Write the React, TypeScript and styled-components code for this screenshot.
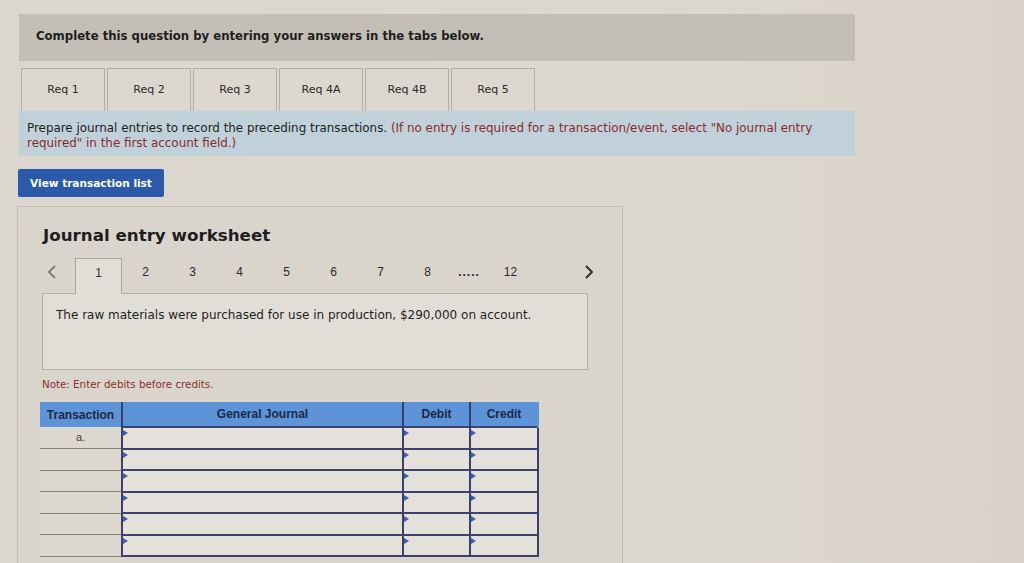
import React from 'react'
import styled, { createGlobalStyle } from 'styled-components'

const tabs = ['Req 1', 'Req 2', 'Req 3', 'Req 4A', 'Req 4B', 'Req 5']
const pages = ['2', '3', '4', '5', '6', '7', '8']
const rows = ['a.', '', '', '', '', '']

export default function App() {
	return (
		<Page>
			<GlobalStyle />
			<Header>Complete this question by entering your answers in the tabs below.</Header>
			<Tabs>
				{tabs.map((t) => (
					<Tab key={t}>{t}</Tab>
				))}
			</Tabs>
			<Instructions>
				Prepare journal entries to record the preceding transactions.{' '}
				<Red>
					(If no entry is required for a transaction/event, select "No journal entry
					required" in the first account field.)
				</Red>
			</Instructions>
			<Button>View transaction list</Button>
			<Worksheet>
				<Title>Journal entry worksheet</Title>
				<Nav>
					<Chevron>
						<svg width="10" height="14" viewBox="0 0 10 14">
							<path d="M8 1 L2 7 L8 13" fill="none" stroke="#6b6862" strokeWidth="1.6" />
						</svg>
					</Chevron>
					<ActivePage>1</ActivePage>
					{pages.map((p) => (
						<PageNum key={p}>{p}</PageNum>
					))}
					<Dots>.....</Dots>
					<PageNum>12</PageNum>
					<NavRight>
						<svg width="10" height="14" viewBox="0 0 10 14">
							<path d="M2 1 L8 7 L2 13" fill="none" stroke="#2a2a2a" strokeWidth="1.8" />
						</svg>
					</NavRight>
				</Nav>
				<Description>
					The raw materials were purchased for use in production, $290,000 on account.
				</Description>
				<Note>Note: Enter debits before credits.</Note>
				<Table>
					<colgroup>
						<col style={{ width: 82 }} />
						<col style={{ width: 281 }} />
						<col style={{ width: 67 }} />
						<col style={{ width: 68 }} />
					</colgroup>
					<thead>
						<tr>
							<Th>Transaction</Th>
							<Th>General Journal</Th>
							<Th>Debit</Th>
							<Th>Credit</Th>
						</tr>
					</thead>
					<tbody>
						{rows.map((r, i) => (
							<tr key={i}>
								<TxCell>{r}</TxCell>
								<InputCell />
								<InputCell />
								<InputCell />
							</tr>
						))}
					</tbody>
				</Table>
			</Worksheet>
		</Page>
	)
}

const GlobalStyle = createGlobalStyle`
	html, body {
		margin: 0;
		background: #dbd6cd;
		font-family: "DejaVu Sans", Verdana, sans-serif;
		overflow: hidden;
	}
`

const Page = styled.div`
	width: 1024px;
	height: 563px;
	overflow: hidden;
	padding: 14px 0 0 19px;
	box-sizing: border-box;
	background: linear-gradient(90deg, #dcd7ce 0%, #ddd8cf 70%, #d8d2c8 100%);
`

const Header = styled.div`
	width: 836px;
	height: 47px;
	box-sizing: border-box;
	padding: 0 17px 4px;
	display: flex;
	align-items: center;
	background: #c3beb6;
	font-size: 11.7px;
	font-weight: bold;
	color: #1e1e1e;
`

const Tabs = styled.div`
	display: flex;
	gap: 2px;
	margin: 7px 0 0 2px;
`

const Tab = styled.div`
	width: 84px;
	height: 43px;
	box-sizing: border-box;
	display: flex;
	align-items: center;
	justify-content: center;
	padding-bottom: 2px;
	background: #dcd8d0;
	border: 1px solid #b3aea6;
	border-bottom: none;
	font-size: 11px;
	color: #2a2a2a;
`

const Instructions = styled.div`
	width: 836px;
	height: 45px;
	box-sizing: border-box;
	padding: 10px 30px 0 8px;
	background: #c0d1da;
	font-size: 11.9px;
	line-height: 15px;
	color: #1e1e1e;
`

const Red = styled.span`
	color: #8a2a2e;
`

const Button = styled.button`
	display: block;
	margin: 13px 0 0 -1px;
	width: 146px;
	height: 28px;
	border: none;
	border-radius: 2px;
	background: #2b5aab;
	color: #fff;
	font-family: "DejaVu Sans", Verdana, sans-serif;
	font-size: 10.5px;
	font-weight: bold;
	text-align: center;
	padding: 0;
`

const Worksheet = styled.section`
	margin: 9px 0 0 -2px;
	width: 606px;
	height: 358px;
	box-sizing: border-box;
	padding: 0 0 0 24px;
	background: #d9d5cd;
	border: 1px solid #c2bdb5;
	border-bottom: none;
`

const Title = styled.h2`
	margin: 17px 0 0 1px;
	font-size: 16.7px;
	font-weight: bold;
	color: #1e1e1e;
	line-height: 22px;
`

const Nav = styled.div`
	display: flex;
	align-items: stretch;
	height: 35px;
	margin-top: 12px;
	width: 546px;
`

const Chevron = styled.div`
	width: 33px;
	display: flex;
	align-items: center;
	justify-content: flex-start;
	padding: 0 0 8px 5px;
	box-sizing: border-box;
`

const PageNum = styled.div`
	width: 47px;
	display: flex;
	align-items: center;
	justify-content: center;
	padding-bottom: 8px;
	font-family: "Liberation Sans", Arial, sans-serif;
	font-size: 12px;
	color: #2a2a2a;
`

const ActivePage = styled(PageNum)`
	background: #e1ded7;
	border: 1px solid #aaa69f;
	border-bottom: none;
	box-sizing: border-box;
	position: relative;
	z-index: 1;
	margin-bottom: -1px;
	color: #333;
`

const Dots = styled(PageNum)`
	width: 36px;
	font-weight: bold;
	letter-spacing: 1px;
`

const NavRight = styled.div`
	margin-left: auto;
	margin-right: -6px;
	display: flex;
	align-items: center;
	padding-bottom: 8px;
`

const Description = styled.div`
	width: 546px;
	height: 77px;
	box-sizing: border-box;
	padding: 14px 13px;
	background: #e1ded7;
	border: 1px solid #b5b0a8;
	font-size: 12px;
	color: #1e1e1e;
`

const Note = styled.div`
	margin-top: 8px;
	font-size: 10.3px;
	color: #8a2f30;
`

const Table = styled.table`
	margin: 12px 0 0 -2px;
	width: 498px;
	table-layout: fixed;
	border-collapse: collapse;
	font-family: "Liberation Sans", Arial, sans-serif;
`

const Th = styled.th`
	height: 24px;
	padding: 0;
	background: #5c94d7;
	color: #1c2847;
	font-size: 12px;
	font-weight: bold;
	border-left: 2px solid #36416a;
	&:first-child {
		border-left: none;
	}
	&:last-child {
		border-right: 2px solid #5c94d7;
	}
`

const TxCell = styled.td`
	height: 21.5px;
	padding: 4px 0 0;
	text-align: center;
	vertical-align: top;
	box-sizing: border-box;
	font-size: 11px;
	color: #444;
	background: #dcd8d0;
	border-bottom: 1px solid #85827c;
`

const InputCell = styled.td`
	height: 21.5px;
	padding: 0;
	box-sizing: border-box;
	background: #e4e1da;
	border: 2px solid #3d416b;
	position: relative;
	&::before {
		content: '';
		position: absolute;
		top: 2px;
		left: 0;
		border-left: 5px solid #3d5fae;
		border-top: 3px solid transparent;
		border-bottom: 3px solid transparent;
	}
`
